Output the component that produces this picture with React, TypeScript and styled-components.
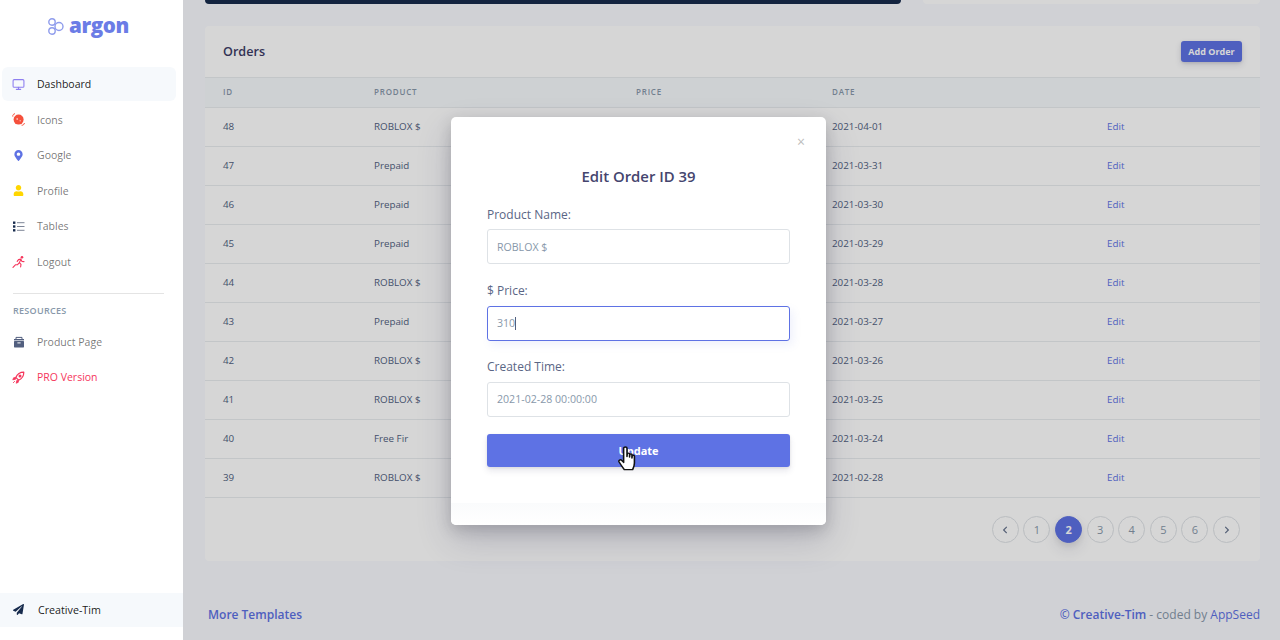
import { ReactNode } from "react";
import styled, { createGlobalStyle } from "styled-components";
import {
  FaChevronLeft,
  FaChevronRight,
  FaMapMarkerAlt,
  FaPaperPlane,
  FaUser,
} from "react-icons/fa";
import { Monitor } from "lucide-react";

const GlobalStyle = createGlobalStyle`
  html, body {
    margin: 0;
    height: 100%;
    overflow: hidden;
    background: #f8f9fe;
    font-family: "Open Sans", "Liberation Sans", sans-serif;
  }
  * { box-sizing: border-box; }
`;

const Page = styled.div`
  position: relative;
  display: flex;
  width: 1280px;
  height: 640px;
  overflow: hidden;
`;

const Sidebar = styled.aside`
  position: relative;
  z-index: 3;
  flex: 0 0 183px;
  display: flex;
  flex-direction: column;
  background: #fff;
  padding-bottom: 13px;
`;

const Brand = styled.div`
  height: 67px;
  padding: 11px 0 0 48px;
  display: flex;
  align-items: flex-start;
  gap: 5px;
`;

const BrandName = styled.span`
  font-size: 20.6px;
  line-height: 29px;
  font-weight: 800;
  color: #6b7ce6;
  letter-spacing: -0.4px;
`;

const NavItem = styled.a<{ $active?: boolean; $color?: string }>`
  display: flex;
  align-items: center;
  height: 34px;
  margin: 0 7px 1.5px 2px;
  padding-left: 10px;
  border-radius: 6px;
  font-size: 10.5px;
  color: ${(p) => p.$color ?? (p.$active ? "rgba(0,0,0,.9)" : "rgba(0,0,0,.55)")};
  background: ${(p) => (p.$active ? "#f6f9fc" : "transparent")};
`;

const NavIcon = styled.span<{ $color: string }>`
  flex: 0 0 25px;
  display: flex;
  align-items: center;
  color: ${(p) => p.$color};
  font-size: 12px;
`;

const Divider = styled.hr`
  margin: 12.6px 19px 10px 13px;
  border: 0;
  border-top: 1px solid #e4e4e4;
`;

const NavHeading = styled.h6`
  margin: 0 0 7px 13px;
  font-size: 9px;
  line-height: 14px;
  font-weight: 600;
  letter-spacing: 0.3px;
  color: #8898aa;
`;

const SidebarBottom = styled.a`
  margin-top: auto;
  display: flex;
  align-items: center;
  height: 34px;
  padding: 0 0 1px 13px;
  font-size: 10.7px;
  color: rgba(0, 0, 0, 0.9);
  background: #f6f9fc;
`;

const Main = styled.main`
  flex: 1;
  min-width: 0;
  display: flex;
  flex-direction: column;
  padding: 0 20px 0 22px;
`;

const TopRow = styled.div`
  flex: 0 0 4px;
  display: flex;
  gap: 22px;
  margin-bottom: 22px;
`;

const TopCard = styled.div<{ $dark?: boolean }>`
  flex: ${(p) => (p.$dark ? "0 0 696px" : "1")};
  background: ${(p) => (p.$dark ? "#172b4d" : "#fff")};
  border-radius: 0 0 6px 6px;
`;

const Card = styled.section`
  height: 535px;
  display: flex;
  flex-direction: column;
  background: #fff;
  border-radius: 4px;
`;

const CardHeader = styled.header`
  flex: 0 0 51px;
  display: flex;
  align-items: center;
  justify-content: space-between;
  padding: 0 18px;
`;

const CardTitle = styled.h3`
  margin: 0;
  font-size: 12.6px;
  font-weight: 600;
  color: #3c3c66;
`;

const AddButton = styled.button`
  height: 21px;
  width: 61px;
  padding: 0;
  border: 0;
  border-radius: 3px;
  font-family: inherit;
  font-size: 9px;
  font-weight: 700;
  color: #fff;
  background: #5e72e4;
  box-shadow: 0 3px 6px rgba(50, 50, 93, 0.15), 0 1px 3px rgba(0, 0, 0, 0.1);
`;

const Table = styled.table`
  width: 100%;
  border-collapse: collapse;
  table-layout: fixed;
  th,
  td {
    padding: 0 0 2px 18px;
    text-align: left;
  }
`;

const Head = styled.thead`
  background: #f6f9fc;
  th {
    height: 30px;
    border-top: 1px solid #e9ecef;
    border-bottom: 1px solid #e9ecef;
    font-size: 8px;
    font-weight: 600;
    letter-spacing: 0.8px;
    text-transform: uppercase;
    color: #8898aa;
  }
`;

const Row = styled.tr`
  td {
    height: 39px;
    border-bottom: 1px solid #e9ecef;
    font-size: 9.8px;
    color: #525f7f;
  }
`;

const EditLink = styled.a`
  color: #5e72e4;
`;

const Pager = styled.nav`
  flex: 1;
  display: flex;
  align-items: flex-start;
  justify-content: flex-end;
  gap: 4.6px;
  padding: 18px 20px 0 0;
`;

const PageButton = styled.a<{ $active?: boolean }>`
  flex: 0 0 27px;
  height: 27px;
  display: flex;
  align-items: center;
  justify-content: center;
  border-radius: 50%;
  font-size: 11px;
  font-weight: ${(p) => (p.$active ? 700 : 400)};
  color: ${(p) => (p.$active ? "#fff" : "#8898aa")};
  background: ${(p) => (p.$active ? "#5e72e4" : "#fff")};
  border: 1px solid ${(p) => (p.$active ? "#5e72e4" : "#dee2e6")};
  box-shadow: ${(p) => (p.$active ? "0 7px 14px rgba(50,50,93,.1), 0 3px 6px rgba(0,0,0,.08)" : "none")};
`;

const Footer = styled.footer`
  display: flex;
  justify-content: space-between;
  padding: 46px 0 0 3px;
  font-size: 12px;
  line-height: 16px;
  color: #8898aa;
`;

const FooterLink = styled.a<{ $strong?: boolean }>`
  color: #5e72e4;
  font-weight: ${(p) => (p.$strong ? 600 : 400)};
`;

const Overlay = styled.div`
  position: absolute;
  inset: 0;
  z-index: 2;
  display: flex;
  justify-content: center;
  align-items: flex-start;
  padding: 117px 3px 0 0;
  background: rgba(0, 0, 0, 0.16);
`;

const Modal = styled.div`
  position: relative;
  width: 375px;
  height: 408px;
  display: flex;
  flex-direction: column;
  background: #fff;
  border-radius: 5px;
  box-shadow: 0 15px 35px rgba(50, 50, 93, 0.2), 0 5px 15px rgba(0, 0, 0, 0.17);
`;

const CloseMark = styled.span`
  position: absolute;
  top: 16px;
  right: 21px;
  font-size: 14px;
  line-height: 18px;
  color: #bdbdbd;
`;

const ModalBody = styled.form`
  flex: 1;
  display: flex;
  flex-direction: column;
  padding: 49px 36px 0;
`;

const ModalTitle = styled.h4`
  margin: 0 0 20.6px;
  text-align: center;
  font-size: 14.9px;
  line-height: 20px;
  font-weight: 600;
  color: #45456e;
`;

const FieldGroup = styled.div`
  & + & {
    margin-top: 18.8px;
  }
`;

const FieldLabel = styled.label`
  display: block;
  margin-bottom: 6.6px;
  font-size: 12px;
  line-height: 16px;
  color: #5a6685;
`;

const FieldBox = styled.div<{ $focus?: boolean }>`
  display: flex;
  align-items: center;
  height: 35px;
  padding-left: 9px;
  border: 1px solid ${(p) => (p.$focus ? "#5e72e4" : "#dee2e6")};
  border-radius: 3px;
  font-size: 10.6px;
  color: #8898aa;
  box-shadow: ${(p) => (p.$focus ? "3px 4px 8px rgba(94,114,228,.1)" : "none")};
`;

const Caret = styled.span`
  width: 1px;
  height: 13px;
  background: #525f7f;
`;

const SubmitButton = styled.button`
  position: relative;
  height: 33px;
  margin-top: 17px;
  padding: 0;
  border: 0;
  border-radius: 3px;
  font-family: inherit;
  font-size: 11px;
  font-weight: 700;
  color: #fff;
  background: #5e72e4;
  box-shadow: 0 4px 6px rgba(50, 50, 93, 0.11), 0 1px 3px rgba(0, 0, 0, 0.08);
`;

const HandCursor = styled.svg`
  position: absolute;
  left: 131px;
  top: 12px;
  width: 18px;
  height: 25px;
`;

const ModalFooter = styled.div`
  flex: 0 0 22px;
  border-radius: 0 0 5px 5px;
  background: linear-gradient(#fafbfc, #fff);
`;

type OrderRow = { id: number; product: string; date: string };

const orders: OrderRow[] = [
  { id: 48, product: "ROBLOX $", date: "2021-04-01" },
  { id: 47, product: "Prepaid", date: "2021-03-31" },
  { id: 46, product: "Prepaid", date: "2021-03-30" },
  { id: 45, product: "Prepaid", date: "2021-03-29" },
  { id: 44, product: "ROBLOX $", date: "2021-03-28" },
  { id: 43, product: "Prepaid", date: "2021-03-27" },
  { id: 42, product: "ROBLOX $", date: "2021-03-26" },
  { id: 41, product: "ROBLOX $", date: "2021-03-25" },
  { id: 40, product: "Free Fir", date: "2021-03-24" },
  { id: 39, product: "ROBLOX $", date: "2021-02-28" },
];

const Logo = () => (
  <svg width="16" height="17" viewBox="0 0 16 17" fill="none" stroke="#8f9cec" strokeWidth="1.4" style={{ marginTop: 7 }}>
    <circle cx="4" cy="4" r="3.2" />
    <circle cx="4" cy="13" r="3.2" />
    <circle cx="11" cy="8.5" r="4" />
  </svg>
);

const PlanetIcon = () => (
  <svg width="13" height="13" viewBox="0 0 13 13">
    <circle cx="6.6" cy="6.6" r="5" fill="#f5503c" />
    <circle cx="5.2" cy="6" r="0.9" fill="#fff" opacity=".6" />
    <circle cx="8.2" cy="7.8" r="0.7" fill="#fff" opacity=".6" />
    <path d="M.8 3.6C.6 2.2 1.2 1 3 .7M9.6 12.2C11 12.4 12.2 11.6 12.4 10" fill="none" stroke="#f5503c" strokeWidth="1" />
  </svg>
);

const ListIcon = () => (
  <svg width="12" height="11" viewBox="0 0 12 11" style={{ marginLeft: 1 }}>
    <rect x="0" y="0.5" width="2.4" height="2.4" fill="#172b4d" />
    <rect x="0" y="4.3" width="2.4" height="2.4" fill="#172b4d" />
    <rect x="0" y="8.1" width="2.4" height="2.4" fill="#172b4d" />
    <path d="M4 1.7H11.5M4 5.5H11.5M4 9.3H11.5" stroke="#7d8597" strokeWidth="1" />
  </svg>
);

const RunnerIcon = () => (
  <svg width="13" height="13" viewBox="0 0 13 13" fill="none" stroke="#f5365c" strokeWidth="1.1" strokeLinecap="round" strokeLinejoin="round">
    <circle cx="10" cy="2.2" r="1.3" fill="#f5365c" stroke="none" />
    <path d="M9 4 6.5 4.6 5.2 6.4M9 4 7.4 7.6 9 9.4 8.6 12M7.4 7.6 5.6 9.6 3.4 9.8 1 12.4M9 4.6 10 6.4 12 6.6" />
  </svg>
);

const BoxIcon = () => (
  <svg width="12" height="12" viewBox="0 0 12 12" style={{ marginLeft: 1 }}>
    <path d="M3 3V1.4H9V3" fill="none" stroke="#525f7f" strokeWidth="1" />
    <rect x="1" y="3" width="10" height="1.4" fill="#525f7f" />
    <rect x="1" y="5" width="10" height="6.4" rx="0.6" fill="#525f7f" />
    <rect x="4.4" y="6.4" width="3.2" height="1" fill="#fff" />
  </svg>
);

const RocketIcon = () => (
  <svg width="13" height="13" viewBox="0 0 13 13">
    <path d="M11.8 1.2C8 1.2 5.2 3.2 3.8 6.4L6.6 9.2C9.8 7.8 11.8 5 11.8 1.2Z" fill="none" stroke="#f5365c" strokeWidth="1.2" strokeLinejoin="round" />
    <circle cx="8" cy="5" r="1.5" fill="#f5365c" />
    <path d="M3.8 6.4 1.6 6.8.8 8.8 3.6 8.2ZM6.6 9.2 6.2 11.4 4.2 12.2 4.8 9.4ZM1 12 3 10" fill="#f5365c" stroke="#f5365c" strokeWidth=".8" />
  </svg>
);

const navItems: { label: string; color: string; icon: ReactNode; active?: boolean }[] = [
  { label: "Dashboard", color: "#8e7ff0", icon: <Monitor size={13} strokeWidth={2} />, active: true },
  { label: "Icons", color: "#fb6340", icon: <PlanetIcon /> },
  { label: "Google", color: "#5e72e4", icon: <FaMapMarkerAlt size={11} style={{ marginLeft: 1 }} /> },
  { label: "Profile", color: "#ffd600", icon: <FaUser size={11} style={{ marginLeft: 1 }} /> },
  { label: "Tables", color: "#172b4d", icon: <ListIcon /> },
  { label: "Logout", color: "#f5365c", icon: <RunnerIcon /> },
];

export default function App() {
  return (
    <Page>
      <GlobalStyle />
      <Sidebar>
        <Brand>
          <Logo />
          <BrandName>argon</BrandName>
        </Brand>
        {navItems.map((item) => (
          <NavItem key={item.label} $active={item.active}>
            <NavIcon $color={item.color}>{item.icon}</NavIcon>
            {item.label}
          </NavItem>
        ))}
        <Divider />
        <NavHeading>RESOURCES</NavHeading>
        <NavItem>
          <NavIcon $color="#525f7f">
            <BoxIcon />
          </NavIcon>
          Product Page
        </NavItem>
        <NavItem $color="#f5365c">
          <NavIcon $color="#f5365c">
            <RocketIcon />
          </NavIcon>
          PRO Version
        </NavItem>
        <SidebarBottom>
          <NavIcon $color="#172b4d">
            <FaPaperPlane size={11} />
          </NavIcon>
          Creative-Tim
        </SidebarBottom>
      </Sidebar>

      <Main>
        <TopRow>
          <TopCard $dark />
          <TopCard />
        </TopRow>
        <Card>
          <CardHeader>
            <CardTitle>Orders</CardTitle>
            <AddButton>Add Order</AddButton>
          </CardHeader>
          <Table>
            <colgroup>
              <col style={{ width: 151 }} />
              <col style={{ width: 262 }} />
              <col style={{ width: 196 }} />
              <col style={{ width: 275 }} />
              <col />
            </colgroup>
            <Head>
              <tr>
                <th>ID</th>
                <th>Product</th>
                <th>Price</th>
                <th>Date</th>
                <th />
              </tr>
            </Head>
            <tbody>
              {orders.map((order) => (
                <Row key={order.id}>
                  <td>{order.id}</td>
                  <td>{order.product}</td>
                  <td />
                  <td>{order.date}</td>
                  <td>
                    <EditLink>Edit</EditLink>
                  </td>
                </Row>
              ))}
            </tbody>
          </Table>
          <Pager>
            <PageButton>
              <FaChevronLeft size={8} color="#67748e" />
            </PageButton>
            {[1, 2, 3, 4, 5, 6].map((n) => (
              <PageButton key={n} $active={n === 2}>
                {n}
              </PageButton>
            ))}
            <PageButton>
              <FaChevronRight size={8} color="#67748e" />
            </PageButton>
          </Pager>
        </Card>
        <Footer>
          <FooterLink $strong>More Templates</FooterLink>
          <span>
            <FooterLink $strong>© Creative-Tim</FooterLink> - coded by <FooterLink>AppSeed</FooterLink>
          </span>
        </Footer>
      </Main>

      <Overlay>
        <Modal>
          <CloseMark>×</CloseMark>
          <ModalBody>
            <ModalTitle>Edit Order ID 39</ModalTitle>
            <FieldGroup>
              <FieldLabel>Product Name:</FieldLabel>
              <FieldBox>ROBLOX $</FieldBox>
            </FieldGroup>
            <FieldGroup>
              <FieldLabel>$ Price:</FieldLabel>
              <FieldBox $focus>
                310
                <Caret />
              </FieldBox>
            </FieldGroup>
            <FieldGroup>
              <FieldLabel>Created Time:</FieldLabel>
              <FieldBox>2021-02-28 00:00:00</FieldBox>
            </FieldGroup>
            <SubmitButton type="button">
              Update
              <HandCursor viewBox="0 0 16 25" preserveAspectRatio="none">
                <path
                  d="M5 2.2C5 .6 8 .6 8 2.2V10.5L8.2 8C8.3 6.8 10.2 6.8 10.3 8V11L10.5 8.8C10.6 7.7 12.3 7.7 12.4 8.8V12L12.6 10C12.7 8.9 14.6 8.9 14.6 10.2V17C14.6 20 14 21.5 13 23.6H5.6C4 21.2 2.6 19 1 16C.2 14.4 2.2 13 3.2 14.3L5 16.4Z"
                  fill="#fff"
                  stroke="#111"
                  strokeWidth="1.4"
                  strokeLinejoin="round"
                />
              </HandCursor>
            </SubmitButton>
          </ModalBody>
          <ModalFooter />
        </Modal>
      </Overlay>
    </Page>
  );
}
